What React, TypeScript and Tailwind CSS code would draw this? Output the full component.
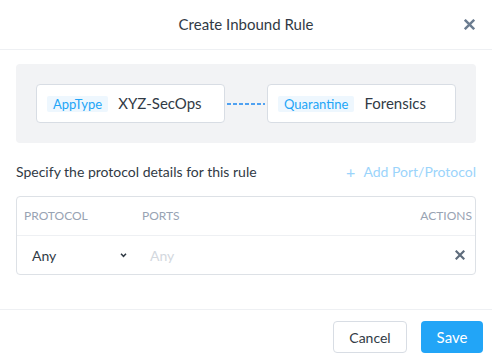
function XIcon({ className }: { className?: string }) {
  return (
    <svg viewBox="0 0 10 10" className={className} fill="none" stroke="currentColor" strokeWidth="2.2" strokeLinecap="square">
      <path d="M1.5 1.5l7 7M8.5 1.5l-7 7" />
    </svg>
  );
}

function EntityCard({ tag, name }: { tag: string; name: string }) {
  return (
    <div className="flex h-[39px] w-[189px] items-center rounded-[4px] border border-[#d8dde4] bg-white pl-[10px]">
      <span className="flex h-[16px] items-center rounded-[2px] bg-[#eef7fe] px-[6px] pt-[2px] text-[13px] text-[#22a5f7]">{tag}</span>
      <span className="ml-[10px] text-[15px] text-[#313a45]">{name}</span>
    </div>
  );
}

export default function App() {
  return (
    <div className="flex h-[362px] w-[492px] flex-col bg-white font-['Lato',sans-serif] text-[#313a45]">
      <div className="relative flex h-[50px] items-center justify-center border-b border-[#eef0f3]">
        <h1 className="text-[15px]">Create Inbound Rule</h1>
        <button className="absolute right-[17px] top-[19px] text-[#6b7c90]">
          <XIcon className="h-[11px] w-[11px]" />
        </button>
      </div>

      <div className="px-4 pt-[14px]">
        <div className="flex items-center rounded-[4px] bg-[#f2f3f5] p-5">
          <EntityCard tag="AppType" name="XYZ-SecOps" />
          <svg className="mx-[2px] h-[2px] flex-1">
            <line x1="0" y1="1" x2="100%" y2="1" stroke="#1a86f0" strokeWidth="1.4" strokeDasharray="4 2" />
          </svg>
          <EntityCard tag="Quarantine" name="Forensics" />
        </div>

        <div className="mt-[18px] flex items-center justify-between">
          <p className="text-[14px]">Specify the protocol details for this rule</p>
          <button className="flex items-center text-[14px] text-[#9bd4fb]">
            <span className="mr-[8px] text-[16px] leading-none">+</span>Add Port/Protocol
          </button>
        </div>

        <div className="mt-[14px] rounded-[4px] border border-[#dde1e6]">
          <div className="flex h-[39px] items-center border-b border-[#eef0f3] pl-[7px] pr-[3px] text-[12px] text-[#98a3b3]">
            <span className="w-[118px]">PROTOCOL</span>
            <span className="flex-1">PORTS</span>
            <span>ACTIONS</span>
          </div>
          <div className="flex h-[38px] items-center pl-[15px] pr-[10px] text-[14px]">
            <div className="flex w-[95px] items-center justify-between">
              <span>Any</span>
              <svg viewBox="0 0 8 6" className="h-[5px] w-[7px] text-[#313a45]" fill="none" stroke="currentColor" strokeWidth="1.8">
                <path d="M1 1l3 3 3-3" />
              </svg>
            </div>
            <span className="ml-[23px] flex-1 text-[#d3d8de]">Any</span>
            <XIcon className="h-[10px] w-[10px] text-[#5e6c7c]" />
          </div>
        </div>
      </div>

      <div className="mt-auto flex h-[53px] items-start justify-end gap-[14px] border-t border-[#eef0f3] px-[9px] pt-[11px]">
        <button className="h-[32px] w-[74px] rounded-[4px] border border-[#d8dde4] bg-white text-[14px] text-[#313a45]">Cancel</button>
        <button className="h-[32px] w-[62px] rounded-[4px] bg-[#22a5f7] text-[15px] text-white">Save</button>
      </div>
    </div>
  );
}
